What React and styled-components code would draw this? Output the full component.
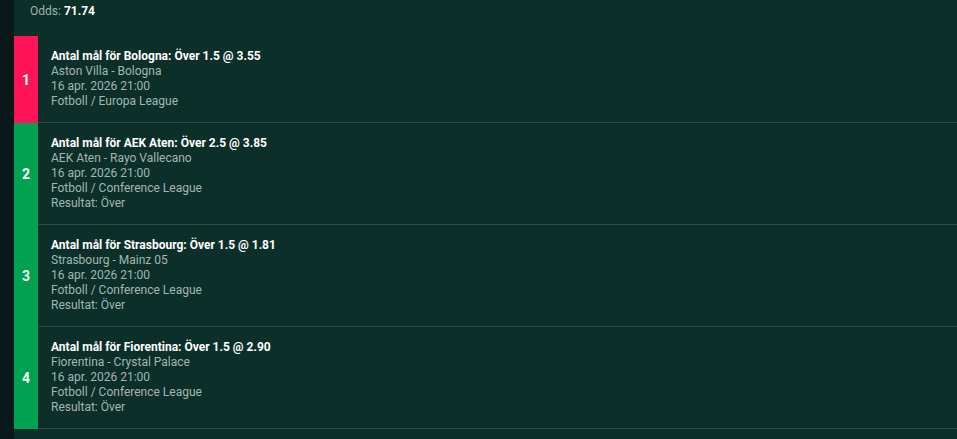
import React from "react";
import styled, { createGlobalStyle } from "styled-components";

const Global = createGlobalStyle`
  html, body { margin: 0; padding: 0; background: #0c3029; }
  body { font-family: Roboto, "Liberation Sans", Arial, sans-serif; }
  #root { min-height: 439px; }
`;

const Page = styled.div`
  display: flex;
  min-height: 439px;
  background: #0c3029;
`;

const Rail = styled.div`
  width: 14px;
  flex: 0 0 14px;
  background: #09191a;
`;

const Main = styled.div`
  flex: 1;
  display: flex;
  flex-direction: column;
`;

const Header = styled.div`
  height: 36px;
  box-sizing: border-box;
  padding: 4px 0 0 16px;
  font-size: 12px;
  line-height: 15px;
  color: #9fb3ad;
`;

const Strong = styled.strong`
  color: #ffffff;
  font-weight: 700;
`;

const Row = styled.div`
  display: flex;
  align-items: stretch;
`;

const Badge = styled.div`
  width: 24px;
  flex: 0 0 24px;
  display: flex;
  align-items: center;
  justify-content: center;
  background: ${(p) => (p.$lost ? "#ff1359" : "#00a251")};
  color: #ffffff;
  font-weight: 700;
  font-size: 14px;
`;

const Body = styled.div`
  flex: 1;
  box-sizing: border-box;
  padding: 13px 13px 13px 13px;
  border-bottom: 1px solid #2b4b44;
  font-size: 12px;
  line-height: 15px;
  color: #a3b6b1;
`;

const Title = styled.div`
  color: #ffffff;
  font-weight: 700;
`;

const Line = styled.div``;

const bets = [
  {
    n: 1,
    lost: true,
    title: "Antal mål för Bologna: Över 1.5 @ 3.55",
    match: "Aston Villa - Bologna",
    date: "16 apr. 2026 21:00",
    league: "Fotboll / Europa League",
  },
  {
    n: 2,
    title: "Antal mål för AEK Aten: Över 2.5 @ 3.85",
    match: "AEK Aten - Rayo Vallecano",
    date: "16 apr. 2026 21:00",
    league: "Fotboll / Conference League",
    result: "Resultat: Över",
  },
  {
    n: 3,
    title: "Antal mål för Strasbourg: Över 1.5 @ 1.81",
    match: "Strasbourg - Mainz 05",
    date: "16 apr. 2026 21:00",
    league: "Fotboll / Conference League",
    result: "Resultat: Över",
  },
  {
    n: 4,
    title: "Antal mål för Fiorentina: Över 1.5 @ 2.90",
    match: "Fiorentina - Crystal Palace",
    date: "16 apr. 2026 21:00",
    league: "Fotboll / Conference League",
    result: "Resultat: Över",
  },
];

export default function App() {
  return (
    <>
      <Global />
      <Page>
        <Rail />
        <Main>
          <Header>
            Odds: <Strong>71.74</Strong>
          </Header>
          {bets.map((b) => (
            <Row key={b.n}>
              <Badge $lost={b.lost}>{b.n}</Badge>
              <Body>
                <Title>{b.title}</Title>
                <Line>{b.match}</Line>
                <Line>{b.date}</Line>
                <Line>{b.league}</Line>
                {b.result && <Line>{b.result}</Line>}
              </Body>
            </Row>
          ))}
        </Main>
      </Page>
    </>
  );
}
